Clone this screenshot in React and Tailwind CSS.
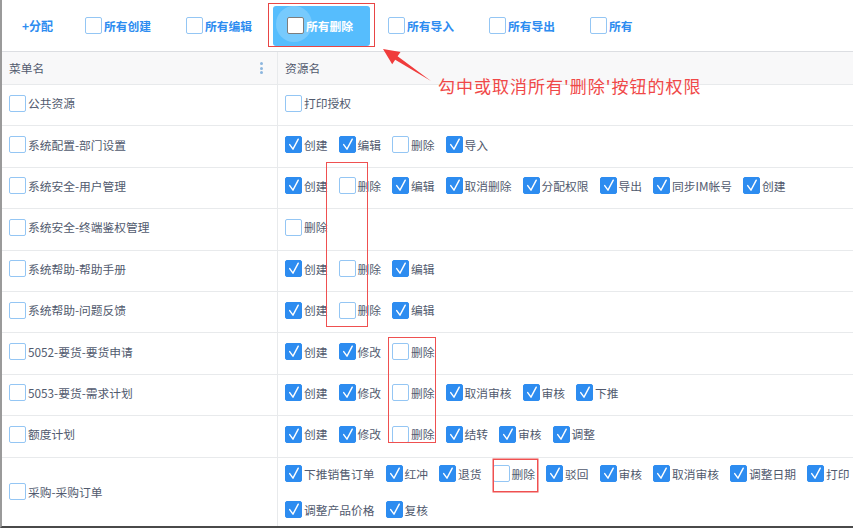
import React from "react";

function Check() {
  return (
    <svg viewBox="0 0 17 17" className="w-full h-full block">
      <path d="M4.2 8.6 L7.9 13.8 L13.9 2.4" fill="none" stroke="#fff" strokeWidth="1.6" strokeLinecap="round" strokeLinejoin="round" />
    </svg>
  );
}

function Box({ checked }) {
  if (checked) {
    return (
      <span className="w-[17px] h-[17px] shrink-0 rounded-[2px] bg-[#2d8cf0] border border-[#2d8cf0] flex items-center justify-center">
        <Check />
      </span>
    );
  }
  return <span className="w-[17px] h-[17px] shrink-0 rounded-[2px] bg-white border border-[#94c6f4] block" />;
}

function Item({ label, checked }) {
  return (
    <span className="flex items-center mr-[11px] shrink-0">
      <Box checked={checked} />
      <span className="ml-[2px] text-[11.75px] leading-[18px] text-[#515a6e] whitespace-nowrap">{label}</span>
    </span>
  );
}

const same = [["创建", 1], ["删除", 0], ["编辑", 1]];
const rows = [
  ["公共资源", [["打印授权", 0]]],
  ["系统配置-部门设置", [["创建", 1], ["编辑", 1], ["删除", 0], ["导入", 1]]],
  ["系统安全-用户管理", [["创建", 1], ["删除", 0], ["编辑", 1], ["取消删除", 1], ["分配权限", 1], ["导出", 1], ["同步IM帐号", 1], ["创建", 1]]],
  ["系统安全-终端鉴权管理", [["删除", 0]]],
  ["系统帮助-帮助手册", same],
  ["系统帮助-问题反馈", same],
  ["5052-要货-要货申请", [["创建", 1], ["修改", 1], ["删除", 0]]],
  ["5053-要货-需求计划", [["创建", 1], ["修改", 1], ["删除", 0], ["取消审核", 1], ["审核", 1], ["下推", 1]]],
  ["额度计划", [["创建", 1], ["修改", 1], ["删除", 0], ["结转", 1], ["审核", 1], ["调整", 1]]],
];
const last1 = [["下推销售订单", 1], ["红冲", 1], ["退货", 1], ["删除", 0], ["驳回", 1], ["审核", 1], ["取消审核", 1], ["调整日期", 1], ["打印", 1]];
const last2 = [["调整产品价格", 1], ["复核", 1]];

function ToolItem({ label, active, fixed = true }) {
  if (active) {
    return (
      <div className="relative w-[97px] h-[40px] pl-[14px] flex items-center rounded-[3px] bg-[#56bdfd] shrink-0 overflow-hidden">
        <span className="absolute left-[3px] top-[0px] w-[36px] h-[36px] rounded-full bg-white/20" />
        <span className="relative w-[17px] h-[17px] rounded-[2px] bg-white border-[1.5px] border-[#7d7d7d] block shrink-0" />
        <span className="relative ml-[2px] text-[11.75px] font-bold text-white whitespace-nowrap">{label}</span>
      </div>
    );
  }
  return (
    <div className={(fixed ? "w-[97px] " : "") + "h-[40px] pl-[14px] flex items-center shrink-0"}>
      <span className="w-[17px] h-[17px] rounded-[2px] bg-white border border-[#94c6f4] block shrink-0" />
      <span className="ml-[2px] text-[11.75px] font-bold text-[#2d8cf0] whitespace-nowrap">{label}</span>
    </div>
  );
}

export default function App() {
  return (
    <div className="relative w-[853px] h-[528px] overflow-hidden bg-white font-['Noto_Sans_CJK_SC',sans-serif]">
      <div className="w-full h-full flex flex-col border-l-2 border-l-[#9a9a9a] border-b-2 border-b-[#4a4a4a]">
        {/* toolbar */}
        <div className="h-[52px] shrink-0 border-b border-[#dcdee2] flex items-center pl-[20px]">
          <span className="w-[49px] text-[12px] font-bold text-[#2d8cf0] whitespace-nowrap">+分配</span>
          <div className="flex items-center gap-[4px]">
            <ToolItem label="所有创建" />
            <ToolItem label="所有编辑" />
            <ToolItem label="所有删除" active />
            <ToolItem label="所有导入" />
            <ToolItem label="所有导出" />
            <ToolItem label="所有" fixed={false} />
          </div>
        </div>
        {/* header */}
        <div className="h-[33px] shrink-0 flex bg-[#f8f8f9] border-b border-[#e8eaec]">
          <div className="w-[276px] shrink-0 border-r border-[#e8eaec] pl-[7px] pr-[14px] flex items-center justify-between">
            <span className="text-[11.75px] text-[#515a6e]">菜单名</span>
            <span className="flex flex-col gap-[1.5px]">
              <span className="w-[3px] h-[3px] rounded-full bg-[#8cb6de]" />
              <span className="w-[3px] h-[3px] rounded-full bg-[#8cb6de]" />
              <span className="w-[3px] h-[3px] rounded-full bg-[#8cb6de]" />
            </span>
          </div>
          <div className="flex-1 pl-[7px] flex items-center">
            <span className="text-[11.75px] text-[#515a6e]">资源名</span>
          </div>
        </div>
        {rows.map(([name, items], i) => (
          <div key={i} className="h-[41.4px] shrink-0 flex border-b border-[#e8eaec]">
            <div className="w-[276px] shrink-0 border-r border-[#e8eaec] pl-[7px] pb-[4px] flex items-center">
              <Item label={name} checked={false} />
            </div>
            <div className="flex-1 pl-[7px] pb-[4px] flex items-center overflow-hidden">
              {items.map(([l, c], j) => (
                <Item key={j} label={l} checked={!!c} />
              ))}
            </div>
          </div>
        ))}
        <div className="flex-1 flex">
          <div className="w-[276px] shrink-0 border-r border-[#e8eaec] pl-[7px] flex items-center">
            <Item label="采购-采购订单" checked={false} />
          </div>
          <div className="flex-1 pl-[7px] flex flex-col justify-center gap-[18px] overflow-hidden">
            <div className="flex items-center h-[18px]">
              {last1.map(([l, c], j) => (
                <Item key={j} label={l} checked={!!c} />
              ))}
            </div>
            <div className="flex items-center h-[18px]">
              {last2.map(([l, c], j) => (
                <Item key={j} label={l} checked={!!c} />
              ))}
            </div>
          </div>
        </div>
      </div>

      {/* annotations */}
      <div className="absolute left-[268px] top-[3px] w-[107px] h-[44px] border border-[#e84545]" />
      <div className="absolute left-[326px] top-[162px] w-[42px] h-[165px] border-[1.5px] border-[#ef5050]" />
      <div className="absolute left-[388px] top-[337px] w-[48px] h-[106px] border-[1.5px] border-[#ef5050]" />
      <svg className="absolute left-[492px] top-[458px]" width="47" height="35" viewBox="0 0 47 35">
        <rect x="1.25" y="1.25" width="44.5" height="32.5" fill="none" stroke="#ef5050" strokeWidth="1.5" />
      </svg>
      <svg className="absolute left-[376px] top-[44px]" width="60" height="42" viewBox="376 44 60 42">
        <polygon points="383,49 400.5,52 397.6,56.3 431,81 395.2,59.8 392.2,64.2" fill="#f03c3c" />
      </svg>
      <div className="absolute left-[438px] top-[77px] text-[17px] leading-[18px] tracking-[1px] text-[#f04848] whitespace-nowrap">
        勾中或取消所有'删除'按钮的权限
      </div>
    </div>
  );
}
